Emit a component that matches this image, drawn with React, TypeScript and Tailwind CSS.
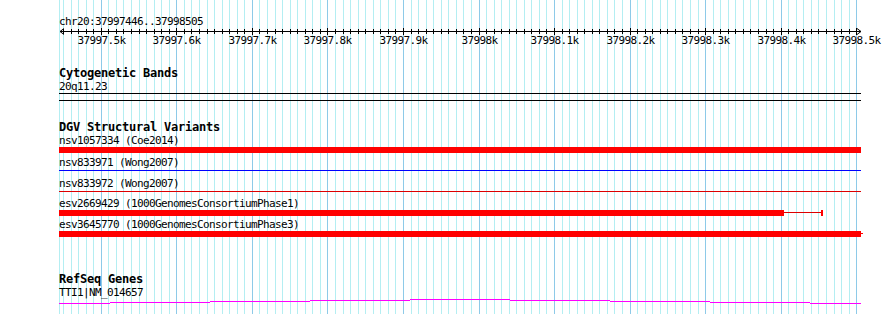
import React from 'react';

const START = 37997446;
const END = 37998505;
const X0 = 60;
const PX = 800 / (END - START);
const xAt = (bp: number) => Math.round(X0 + (bp - START) * PX);

const tickBps: number[] = [];
for (let bp = 37997450; bp <= 37998500; bp += 10) tickBps.push(bp);
const majorBps = tickBps.filter((bp) => bp % 100 === 0);

const fmtK = (bp: number) => `${(bp / 1000).toFixed(1).replace(/\.0$/, '')}k`;

const mono = "font-['DejaVu_Sans_Mono','Liberation_Mono',monospace]";

const Label = ({ children, h = 13 }: { children: React.ReactNode; h?: number }) => (
  <div
    className={`pl-[59px] text-[11px] tracking-[-0.62px] text-black whitespace-pre ${mono}`}
    style={{ height: h, lineHeight: `${h}px` }}
  >
    {children}
  </div>
);

const Heading = ({ children, className = '' }: { children: React.ReactNode; className?: string }) => (
  <div
    className={`h-[13px] pl-[59px] text-[12px] font-bold tracking-[-0.22px] leading-[13px] text-black whitespace-pre ${mono} ${className}`}
  >
    {children}
  </div>
);

const GridBackdrop = () => (
  <svg className="absolute inset-0 pointer-events-none" width={890} height={314} shapeRendering="crispEdges">
    <line x1={59.5} y1={0} x2={59.5} y2={314} stroke="#b4eef2" />
    {tickBps.map((bp) => (
      <line
        key={bp}
        x1={xAt(bp) + 0.5}
        y1={0}
        x2={xAt(bp) + 0.5}
        y2={314}
        stroke={bp % 100 === 0 ? '#8ecae8' : '#b4eef2'}
      />
    ))}
  </svg>
);

const Ruler = () => (
  <svg width={890} height={20} className="block" shapeRendering="crispEdges">
    <line x1={60} y1={3.5} x2={861} y2={3.5} stroke="#000" />
    <polyline points="64,0.5 60,3.5 64,6.5" fill="none" stroke="#000" shapeRendering="auto" />
    <polyline points="857,0.5 861,3.5 857,6.5" fill="none" stroke="#000" shapeRendering="auto" />
    {tickBps.map((bp) => {
      const major = bp % 100 === 0;
      return (
        <line
          key={bp}
          x1={xAt(bp) + 0.5}
          y1={major ? 0 : 1}
          x2={xAt(bp) + 0.5}
          y2={major ? 7 : 6}
          stroke="#000"
        />
      );
    })}
    {majorBps.map((bp) => (
      <text
        key={bp}
        x={xAt(bp) + 0.5}
        y={16}
        textAnchor="middle"
        fontSize={11}
        letterSpacing={-0.62}
        fontFamily="'DejaVu Sans Mono', 'Liberation Mono', monospace"
        fill="#000"
      >
        {fmtK(bp)}
      </text>
    ))}
  </svg>
);

const Row = ({ h, children }: { h: number; children: React.ReactNode }) => (
  <svg width={890} height={h} className="block" shapeRendering="crispEdges">
    {children}
  </svg>
);

const intronSteps: [number, number, number][] = [
  [59, 110, 4],
  [110, 210, 3],
  [210, 310, 2],
  [310, 410, 1],
  [410, 510, 0],
  [510, 610, 1],
  [610, 710, 2],
  [710, 810, 3],
  [810, 861, 4],
];

export default function App() {
  return (
    <div className="relative h-[314px] w-[890px] overflow-hidden bg-white">
      <GridBackdrop />
      <div className="relative flex flex-col">
        <div className="mt-[15px]">
          <Label>chr20:37997446..37998505</Label>
        </div>
        <Ruler />

        <Heading className="mt-[19px]">Cytogenetic Bands</Heading>
        <Label>20q11.23</Label>
        <Row h={8}>
          <rect x={59} y={0} width={802} height={1} fill="#000" />
          <rect x={59} y={7} width={802} height={1} fill="#000" />
        </Row>

        <Heading className="mt-[20px]">DGV Structural Variants</Heading>
        <Label>nsv1057334 (Coe2014)</Label>
        <Row h={9}>
          <rect x={59} y={0} width={802} height={6} fill="#ff0000" />
        </Row>
        <Label>nsv833971 (Wong2007)</Label>
        <Row h={8}>
          <rect x={59} y={1} width={802} height={1} fill="#0000ff" />
        </Row>
        <Label>nsv833972 (Wong2007)</Label>
        <Row h={7}>
          <rect x={59} y={1} width={802} height={1} fill="#dd0000" />
        </Row>
        <Label>esv2669429 (1000GenomesConsortiumPhase1)</Label>
        <Row h={9}>
          <rect x={59} y={0} width={725} height={6} fill="#ff0000" />
          <rect x={784} y={2} width={37} height={1} fill="#dd0000" />
          <rect x={821} y={0} width={2} height={6} fill="#ff0000" />
        </Row>
        <Label h={12}>esv3645770 (1000GenomesConsortiumPhase3)</Label>
        <Row h={6}>
          <rect x={59} y={0} width={802} height={6} fill="#ff0000" />
          <rect x={861} y={2} width={2} height={1} fill="#ff0000" />
        </Row>

        <Heading className="mt-[36px]">RefSeq Genes</Heading>
        <Label>TTI1|NM_014657</Label>
        <Row h={6}>
          {intronSteps.map(([a, b, y]) => (
            <rect key={a} x={a} y={y} width={b - a} height={1} fill="#ff00ff" />
          ))}
        </Row>
      </div>
    </div>
  );
}
